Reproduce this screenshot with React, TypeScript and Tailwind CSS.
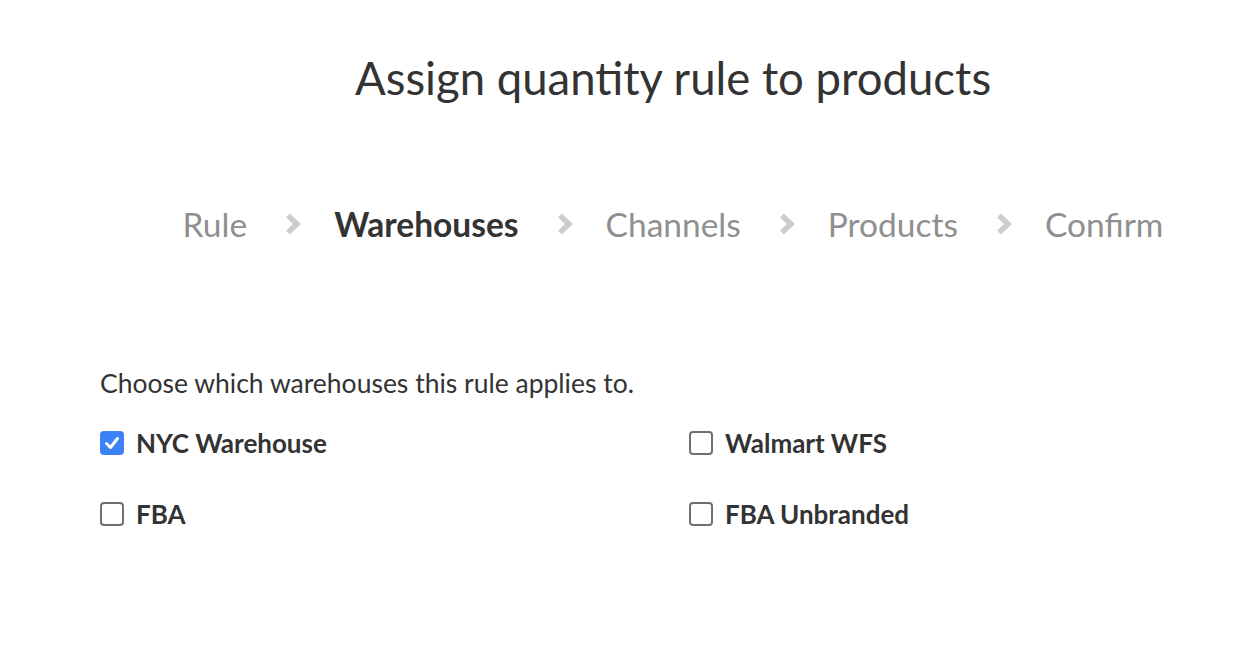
import { useState } from "react";

const steps = ["Rule", "Warehouses", "Channels", "Products", "Confirm"];

const warehouses = [
  { name: "NYC Warehouse", checked: true },
  { name: "Walmart WFS", checked: false },
  { name: "FBA", checked: false },
  { name: "FBA Unbranded", checked: false },
];

function Chevron() {
  return (
    <svg width="16" height="24" viewBox="0 0 16 24" className="shrink-0">
      <polyline
        points="3,3.5 12,12 3,20.5"
        fill="none"
        stroke="#cccccc"
        strokeWidth="5.5"
        strokeLinejoin="miter"
      />
    </svg>
  );
}

function Checkbox({ checked, onChange }: { checked: boolean; onChange: () => void }) {
  return (
    <button
      type="button"
      onClick={onChange}
      className={
        checked
          ? "w-6 h-6 rounded-[4px] bg-[#3b82f6] flex items-center justify-center shrink-0"
          : "w-6 h-6 rounded-[4px] border-2 border-[#707070] bg-white shrink-0"
      }
    >
      {checked && (
        <svg width="16" height="16" viewBox="0 0 16 16">
          <polyline
            points="2.5,8.5 6.5,12.5 13.5,3.5"
            fill="none"
            stroke="white"
            strokeWidth="3"
            strokeLinecap="round"
            strokeLinejoin="round"
          />
        </svg>
      )}
    </button>
  );
}

export default function App() {
  const [items, setItems] = useState(warehouses);

  const toggle = (name: string) =>
    setItems((prev) => prev.map((w) => (w.name === name ? { ...w, checked: !w.checked } : w)));

  return (
    <div className="min-h-[662px] bg-white text-[#333333] pl-[88px]" style={{ fontFamily: "Lato, 'Open Sans', sans-serif" }}>
      {/* Title */}
      <h1 className="text-center text-[45.5px] leading-[56px] pt-[50px] text-[#333333]">
        Assign quantity rule to products
      </h1>

      {/* Stepper */}
      <div className="flex items-center justify-center mt-[98px] text-[33.5px] leading-[40px]">
        {steps.map((step, i) => (
          <div key={step} className="flex items-center">
            <span className={step === "Warehouses" ? "font-bold text-[#333333]" : "text-[#8f8f8f]"}>{step}</span>
            {i < steps.length - 1 && (
              <div className="ml-[38px] mr-[33px] flex items-center">
                <Chevron />
              </div>
            )}
          </div>
        ))}
      </div>

      {/* Warehouses */}
      <div className="pl-[12px] mt-[123px]">
        <p className="text-[26.5px] leading-[32px] text-[#333333]">Choose which warehouses this rule applies to.</p>
        <div className="grid grid-cols-[589px_1fr] gap-y-[41px] mt-[29px]">
          {items.map((w) => (
            <label key={w.name} className="flex items-center gap-3 cursor-pointer">
              <Checkbox checked={w.checked} onChange={() => toggle(w.name)} />
              <span className="text-[26px] leading-[30px] font-bold text-[#333333]">{w.name}</span>
            </label>
          ))}
        </div>
      </div>
    </div>
  );
}
